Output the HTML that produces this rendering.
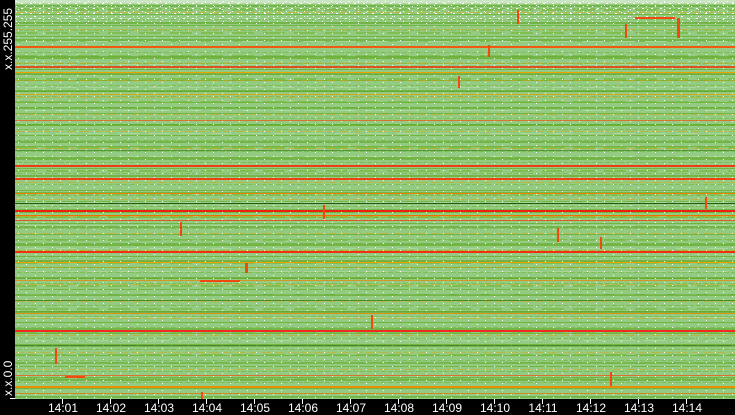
<!DOCTYPE html>
<html><head><meta charset="utf-8"><style>
html,body{margin:0;padding:0;background:#000;width:735px;height:415px;overflow:hidden;font-family:"Liberation Sans",sans-serif}
#plot{position:absolute;left:15px;top:0;width:720px;height:399px;background:#93cb82;overflow:hidden}
.lab{position:absolute;color:#fff;font-size:12px;top:401px;transform:translateX(-50%)}
.tick{position:absolute;top:399px;width:1px;height:5px;background:#fff}
.ylab{position:absolute;color:#fff;font-size:12px;transform:rotate(-90deg);transform-origin:left top;left:1px}
</style></head><body>
<div id="plot">
<svg width="720" height="399" style="position:absolute;left:0;top:0">
<defs>
<pattern id="g1" width="7" height="11" patternUnits="userSpaceOnUse"><rect x="0" y="3" width="7" height="1" fill="#6caf2d" opacity=".8"/><rect x="2" y="8" width="5" height="1" fill="#7fbd55"/></pattern>
<pattern id="g2" width="13" height="17" patternUnits="userSpaceOnUse"><rect x="0" y="5" width="13" height="2" fill="#5fa624" opacity=".6"/><rect x="0" y="12" width="9" height="1" fill="#e8a000" opacity=".5"/></pattern>
<pattern id="g3" width="31" height="23" patternUnits="userSpaceOnUse"><rect x="0" y="9" width="22" height="2" fill="#76b83a" opacity=".7"/><rect x="10" y="18" width="21" height="1" fill="#a8d698"/></pattern>
<pattern id="w" width="9" height="5" patternUnits="userSpaceOnUse"><rect x="1" y="1" width="1" height="1" fill="#fff"/><rect x="6" y="3" width="2" height="1" fill="#fff"/></pattern>
<pattern id="w2" width="17" height="7" patternUnits="userSpaceOnUse"><rect x="3" y="2" width="1" height="1" fill="#fff"/><rect x="11" y="5" width="1" height="1" fill="#fff"/></pattern>
</defs>
<rect width="720" height="399" fill="url(#g1)"/>
<rect width="720" height="399" fill="url(#g3)"/>
<rect width="720" height="399" fill="url(#g2)"/>
<rect width="720" height="399" fill="url(#w2)"/>
<rect width="720" height="22" fill="url(#w)"/>
<rect y="0" width="720" height="4" fill="#fff" opacity=".5"/>
<rect y="46" width="720" height="2" fill="#f05a10"/>
<rect y="66" width="720" height="2" fill="#ec3b10" opacity=".85"/>
<rect y="72" width="720" height="1" fill="#f0a000"/>
<rect y="94" width="720" height="1" fill="#e8a000" opacity=".8"/>
<rect y="120" width="720" height="1" fill="#f05010" opacity=".7"/>
<rect y="150" width="720" height="1" fill="#3a7a20" opacity=".7"/>
<rect y="165" width="720" height="2" fill="#f03a10"/>
<rect y="178" width="720" height="2" fill="#f04010"/>
<rect y="193" width="720" height="1" fill="#f08000"/>
<rect y="203" width="720" height="1" fill="#1f5a10"/>
<rect y="210" width="720" height="2" fill="#f02010"/>
<rect y="215" width="720" height="1" fill="#f07000"/>
<rect y="220" width="720" height="1" fill="#f04010" opacity=".8"/>
<rect y="251" width="720" height="2" fill="#f03010"/>
<rect y="262" width="720" height="1" fill="#f0a000"/>
<rect y="280" width="720" height="1" fill="#f08000" opacity=".7"/>
<rect y="300" width="720" height="1" fill="#3a7a20" opacity=".7"/>
<rect y="313" width="720" height="1" fill="#f08000" opacity=".8"/>
<rect y="330" width="720" height="2" fill="#f02a20"/>
<rect y="345" width="720" height="1" fill="#2a6a20" opacity=".6"/>
<rect y="375" width="720" height="1" fill="#f05010" opacity=".7"/>
<rect y="386" width="720" height="2" fill="#e89000"/>
<rect y="393" width="720" height="1" fill="#f07000" opacity=".7"/>
<g fill="#f04a10">
<rect x="40" y="348" width="2" height="16"/><rect x="165" y="222" width="2" height="14"/>
<rect x="308" y="205" width="2" height="14"/><rect x="542" y="228" width="2" height="14"/>
<rect x="502" y="10" width="2" height="14"/><rect x="610" y="24" width="2" height="14"/>
<rect x="662" y="18" width="3" height="20"/><rect x="473" y="45" width="2" height="12"/>
<rect x="356" y="315" width="2" height="14"/><rect x="186" y="392" width="2" height="8"/>
<rect x="595" y="372" width="2" height="14"/><rect x="585" y="237" width="2" height="12"/>
<rect x="443" y="76" width="2" height="12"/><rect x="690" y="197" width="2" height="12"/>
<rect x="185" y="280" width="40" height="2"/><rect x="620" y="17" width="40" height="2"/>
<rect x="230" y="263" width="3" height="10"/><rect x="50" y="376" width="20" height="2"/>
</g>
</svg>
</div>
<div class="ylab" style="top:70px">x.x.255.255</div>
<div class="ylab" style="top:396px">x.x.0.0</div>
<div style="position:absolute;left:10px;top:398px;width:5px;height:1px;background:#fff"></div>
<div class="tick" style="left:62px"></div><div class="lab" style="left:63px">14:01</div>
<div class="tick" style="left:110px"></div><div class="lab" style="left:111px">14:02</div>
<div class="tick" style="left:158px"></div><div class="lab" style="left:159px">14:03</div>
<div class="tick" style="left:206px"></div><div class="lab" style="left:207px">14:04</div>
<div class="tick" style="left:254px"></div><div class="lab" style="left:255px">14:05</div>
<div class="tick" style="left:302px"></div><div class="lab" style="left:303px">14:06</div>
<div class="tick" style="left:350px"></div><div class="lab" style="left:351px">14:07</div>
<div class="tick" style="left:398px"></div><div class="lab" style="left:399px">14:08</div>
<div class="tick" style="left:446px"></div><div class="lab" style="left:447px">14:09</div>
<div class="tick" style="left:494px"></div><div class="lab" style="left:495px">14:10</div>
<div class="tick" style="left:542px"></div><div class="lab" style="left:543px">14:11</div>
<div class="tick" style="left:590px"></div><div class="lab" style="left:591px">14:12</div>
<div class="tick" style="left:638px"></div><div class="lab" style="left:639px">14:13</div>
<div class="tick" style="left:686px"></div><div class="lab" style="left:687px">14:14</div>
</body></html>
